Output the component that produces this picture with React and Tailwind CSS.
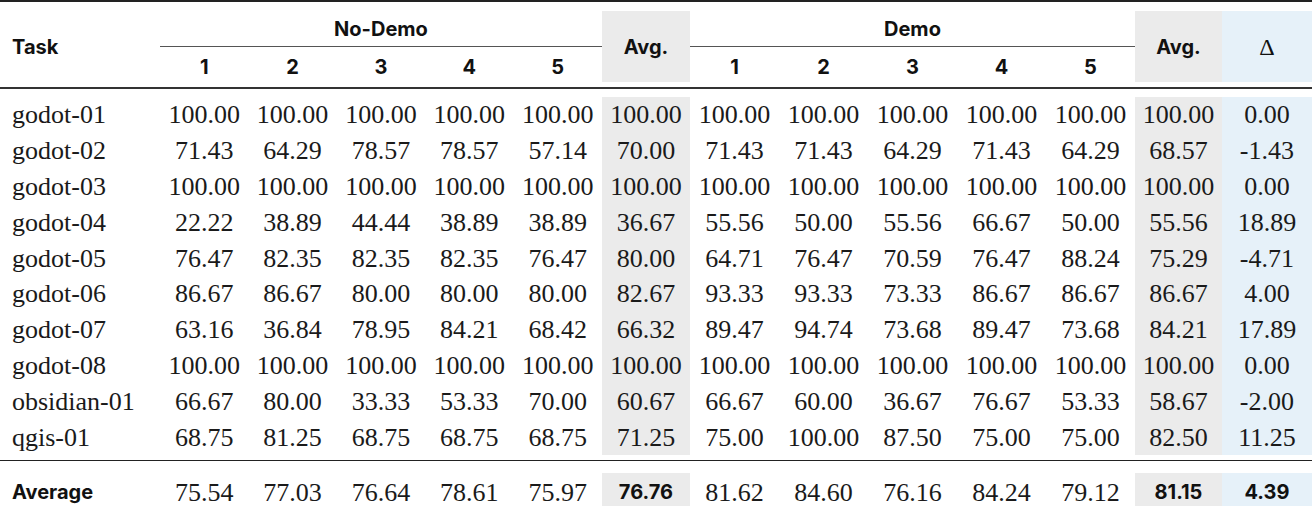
import React from "react";

const GRID =
  "grid grid-cols-[160px_repeat(5,88.4px)_88px_repeat(5,89px)_87px_90px]";

const rows = [
  ["godot-01", ["100.00", "100.00", "100.00", "100.00", "100.00"], "100.00", ["100.00", "100.00", "100.00", "100.00", "100.00"], "100.00", "0.00"],
  ["godot-02", ["71.43", "64.29", "78.57", "78.57", "57.14"], "70.00", ["71.43", "71.43", "64.29", "71.43", "64.29"], "68.57", "-1.43"],
  ["godot-03", ["100.00", "100.00", "100.00", "100.00", "100.00"], "100.00", ["100.00", "100.00", "100.00", "100.00", "100.00"], "100.00", "0.00"],
  ["godot-04", ["22.22", "38.89", "44.44", "38.89", "38.89"], "36.67", ["55.56", "50.00", "55.56", "66.67", "50.00"], "55.56", "18.89"],
  ["godot-05", ["76.47", "82.35", "82.35", "82.35", "76.47"], "80.00", ["64.71", "76.47", "70.59", "76.47", "88.24"], "75.29", "-4.71"],
  ["godot-06", ["86.67", "86.67", "80.00", "80.00", "80.00"], "82.67", ["93.33", "93.33", "73.33", "86.67", "86.67"], "86.67", "4.00"],
  ["godot-07", ["63.16", "36.84", "78.95", "84.21", "68.42"], "66.32", ["89.47", "94.74", "73.68", "89.47", "73.68"], "84.21", "17.89"],
  ["godot-08", ["100.00", "100.00", "100.00", "100.00", "100.00"], "100.00", ["100.00", "100.00", "100.00", "100.00", "100.00"], "100.00", "0.00"],
  ["obsidian-01", ["66.67", "80.00", "33.33", "53.33", "70.00"], "60.67", ["66.67", "60.00", "36.67", "76.67", "53.33"], "58.67", "-2.00"],
  ["qgis-01", ["68.75", "81.25", "68.75", "68.75", "68.75"], "71.25", ["75.00", "100.00", "87.50", "75.00", "75.00"], "82.50", "11.25"],
];

const serif = "font-['Liberation_Serif',serif] text-[26px] text-[#1a1a1a]";
const sans = "font-['Inter',sans-serif] font-bold text-[20px] text-[#111]";

function Cell({ children, className = "" }) {
  return (
    <div className={`flex items-center justify-center ${className}`}>
      {children}
    </div>
  );
}

export default function App() {
  return (
    <div className="w-[1312px] h-[506px] bg-white overflow-hidden">
      <div className="h-[2px] bg-[#222]" />
      <div className="h-[9px]" />

      {/* Header */}
      <div className={`${GRID} grid-rows-[36px_35px] ${sans}`}>
        <div className="col-start-1 row-start-1 row-span-2 flex items-center pl-3">
          Task
        </div>
        <div className="col-start-2 col-span-5 row-start-1 flex items-center justify-center border-b border-[#555]">
          No-Demo
        </div>
        <div className="col-start-7 row-start-1 row-span-2 flex items-center justify-center bg-[#ebebeb]">
          Avg.
        </div>
        <div className="col-start-8 col-span-5 row-start-1 flex items-center justify-center border-b border-[#555]">
          Demo
        </div>
        <div className="col-start-13 row-start-1 row-span-2 flex items-center justify-center bg-[#ebebeb]">
          Avg.
        </div>
        <div className="col-start-14 row-start-1 row-span-2 flex items-center justify-center bg-[#e6f1f9] font-['Liberation_Serif',serif] font-normal text-[24px]">
          Δ
        </div>
        {["1", "2", "3", "4", "5"].map((n, i) => (
          <Cell key={"a" + n} className={`row-start-2 pt-1 ${["col-start-2", "col-start-3", "col-start-4", "col-start-5", "col-start-6"][i]}`}>
            {n}
          </Cell>
        ))}
        {["1", "2", "3", "4", "5"].map((n, i) => (
          <Cell key={"b" + n} className={`row-start-2 pt-1 ${["col-start-8", "col-start-9", "col-start-10", "col-start-11", "col-start-12"][i]}`}>
            {n}
          </Cell>
        ))}
      </div>

      <div className="h-[5px]" />
      <div className="h-[2px] bg-[#333]" />
      <div className="h-[8px]" />

      {/* Body */}
      <div className={`${GRID} auto-rows-[35.8px] ${serif}`}>
        {rows.map((r) => (
          <React.Fragment key={r[0]}>
            <div className="flex items-center pl-3">{r[0]}</div>
            {r[1].map((v, i) => (
              <Cell key={"n" + i}>{v}</Cell>
            ))}
            <Cell className="bg-[#ebebeb]">{r[2]}</Cell>
            {r[3].map((v, i) => (
              <Cell key={"d" + i}>{v}</Cell>
            ))}
            <Cell className="bg-[#ebebeb]">{r[4]}</Cell>
            <Cell className="bg-[#e6f1f9]">{r[5]}</Cell>
          </React.Fragment>
        ))}
      </div>

      <div className="h-[5px]" />
      <div className="h-[1.5px] bg-[#222]" />
      <div className="h-[11.5px]" />

      {/* Average row */}
      <div className={`${GRID} h-[34px] ${serif}`}>
        <div className={`flex items-center pl-3 pb-[5px] ${sans}`}>Average</div>
        {["75.54", "77.03", "76.64", "78.61", "75.97"].map((v) => (
          <Cell key={"x" + v} className="pb-[5px]">{v}</Cell>
        ))}
        <Cell className={`bg-[#ebebeb] pb-[5px] ${sans}`}>76.76</Cell>
        {["81.62", "84.60", "76.16", "84.24", "79.12"].map((v) => (
          <Cell key={"y" + v} className="pb-[5px]">{v}</Cell>
        ))}
        <Cell className={`bg-[#ebebeb] pb-[5px] ${sans}`}>81.15</Cell>
        <Cell className={`bg-[#e6f1f9] pb-[5px] ${sans}`}>4.39</Cell>
      </div>
    </div>
  );
}
